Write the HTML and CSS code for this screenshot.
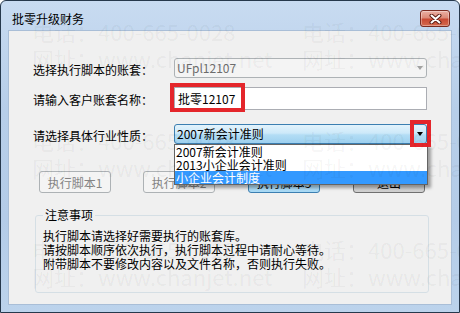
FILE: index.html
```html
<!DOCTYPE html>
<html lang="zh-CN">
<head>
<meta charset="utf-8">
<title>批零升级财务</title>
<link rel="stylesheet" href="styles.css">
</head>
<body>
<div class="window">
  <div class="titlebar">
    <span class="title">批零升级财务</span>
    <button class="close" aria-label="关闭">
      <svg width="13" height="10" viewBox="0 0 13 10"><path d="M2.5 1.5 L10.5 8.5 M10.5 1.5 L2.5 8.5" stroke="#5b1d14" stroke-width="4" stroke-linecap="round"/><path d="M2.5 1.5 L10.5 8.5 M10.5 1.5 L2.5 8.5" stroke="#ffffff" stroke-width="2" stroke-linecap="round"/></svg>
    </button>
  </div>
  <div class="client">
    <div class="row r1">
      <span class="label">选择执行脚本的账套：</span>
      <div class="combo disabled"><span class="value">UFpl12107</span><span class="arrow"></span></div>
    </div>
    <div class="row r2">
      <span class="label">请输入客户账套名称：</span>
      <div class="textbox">批零12107</div>
    </div>
    <div class="row r3">
      <span class="label">请选择具体行业性质：</span>
      <div class="combo-wrap">
        <div class="combo open"><span class="value">2007新会计准则</span><span class="arrow"></span></div>
        <ul class="droplist">
          <li>2007新会计准则</li>
          <li>2013小企业会计准则</li>
          <li class="sel">小企业会计制度</li>
        </ul>
      </div>
    </div>
    <div class="buttons">
      <button class="btn off first">执行脚本1</button>
      <button class="btn off">执行脚本2</button>
      <button class="btn def">执行脚本3</button>
      <button class="btn">退出</button>
    </div>
    <fieldset class="notes">
      <legend>注意事项</legend>
      <p>执行脚本请选择好需要执行的账套库。</p>
      <p>请按脚本顺序依次执行，执行脚本过程中请耐心等待。</p>
      <p>附带脚本不要修改内容以及文件名称，否则执行失败。</p>
    </fieldset>
    <div class="mark mark-name"></div>
    <div class="mark mark-arrow"></div>
  </div>
  <div class="watermark">
    <div class="wm"><div>电话：400-665-0028</div><div>网址：www.chanjet.net</div></div>
    <div class="wm"><div>电话：400-665-0028</div><div>网址：www.chanjet.net</div></div>
    <div class="wm"><div>电话：400-665-0028</div><div>网址：www.chanjet.net</div></div>
    <div class="wm"><div>电话：400-665-0028</div><div>网址：www.chanjet.net</div></div>
    <div class="wm"><div>电话：400-665-0028</div><div>网址：www.chanjet.net</div></div>
    <div class="wm"><div>电话：400-665-0028</div><div>网址：www.chanjet.net</div></div>
  </div>
</div>
</body>
</html>
```
FILE: styles.css
```css
* { box-sizing: border-box; }
body {
  margin: 0;
  background: #ffffff;
  font-family: "Noto Sans CJK SC", "DejaVu Sans", sans-serif;
  font-size: 12px;
  color: #000;
}
.window {
  position: relative;
  width: 460px;
  height: 313px;
  border: 1px solid #26384c;
  border-radius: 6px 6px 0 0;
  background: linear-gradient(180deg, #c8dbf1 0%, #b7cee9 35%, #b4cce8 70%, #bcd3ec 100%);
  display: flex;
  flex-direction: column;
  padding: 0 7px 7px 7px;
  overflow: hidden;
}
.titlebar {
  height: 29px;
  flex: none;
  display: flex;
  align-items: flex-start;
  margin: 0 -7px;
  padding: 0 9px 0 11px;
}
.title {
  margin-top: 10px;
  line-height: 16px;
  font-size: 12px;
  color: #000;
}
.close {
  margin-left: auto;
  margin-top: 9px;
  width: 30px;
  height: 17px;
  padding: 0;
  border: 1px solid #7a2c22;
  border-radius: 3px;
  background: linear-gradient(180deg, #eab0a4 0%, #dc8a78 45%, #c84a34 55%, #d56a4e 100%);
  box-shadow: inset 0 0 0 1px rgba(255,255,255,0.35);
  display: flex;
  align-items: center;
  justify-content: center;
}
.client {
  flex: 1;
  position: relative;
  background: #f0f0f0;
  border: 1px solid #a9bed7;
  padding: 27px 0 0 24px;
}
.row {
  display: flex;
  align-items: center;
}
.label {
  width: 141px;
  flex: none;
  padding-top: 3px;
  line-height: 14px;
}
.r2 { margin-top: 9px; }
.r3 { margin-top: 14px; }
.combo {
  width: 253px;
  height: 20px;
  border: 1px solid #adb2b5;
  border-radius: 3px;
  display: flex;
  align-items: center;
  padding-left: 2px;
  line-height: 14px;
}
.combo.disabled {
  background: #f4f4f4;
  color: #6d6d6d;
}
.combo .arrow {
  margin-left: auto;
  margin-right: 3px;
  width: 0;
  height: 0;
  border-left: 3.5px solid transparent;
  border-right: 3.5px solid transparent;
  border-top: 4px solid #000;
}
.combo.disabled .arrow { border-top-color: #a2a2a2; }
.combo.open {
  border-color: #3c7fb1;
  background: linear-gradient(180deg, #e3f3fc 0%, #cde9f9 45%, #b3ddf5 55%, #9dd0ef 100%);
}
.textbox {
  width: 253px;
  height: 23px;
  border: 1px solid #abadb3;
  background: #ffffff;
  padding-left: 3px;
  line-height: 21px;
}
.combo-wrap {
  position: relative;
}
.droplist {
  position: absolute;
  left: 0;
  top: 20px;
  width: 254px;
  margin: 0;
  padding: 0;
  list-style: none;
  background: #ffffff;
  border: 1px solid #646464;
  box-shadow: 3px 3px 3px rgba(0,0,0,0.35);
  z-index: 3;
}
.droplist li {
  height: 13px;
  line-height: 13px;
  padding-left: 1px;
  white-space: nowrap;
}
.droplist li.sel {
  background: #3399ff;
  color: #ffffff;
}
.buttons {
  display: flex;
  gap: 33px;
  margin: 27px 0 0 6px;
}
.btn {
  width: 72px;
  height: 22px;
  padding: 0;
  font-family: inherit;
  font-size: 12px;
  color: #000;
  border: 1px solid #707070;
  border-radius: 3px;
  background: linear-gradient(180deg, #f2f2f2 0%, #ebebeb 48%, #dddddd 52%, #cfcfcf 100%);
}
.btn.first { margin-right: -1px; }
.btn.off {
  border-color: #adb2b5;
  background: #f4f4f4;
  color: #838383;
}
.btn.def {
  border-color: #3c7fb1;
  background: linear-gradient(180deg, #eaf6fd 0%, #d9f0fc 48%, #bee6fd 52%, #a7d9f5 100%);
}
.notes {
  margin: 15px 0 0 2px;
  width: 394px;
  height: 85px;
  border: 1px solid #d5dfe5;
  border-radius: 3px;
  padding: 7px 0 0 7px;
}
.notes legend {
  padding: 0 2px;
  line-height: 14px;
}
.notes p {
  margin: 0;
  line-height: 14px;
  white-space: nowrap;
}
.mark {
  position: absolute;
  border: 4px solid #e4262b;
  z-index: 4;
}
.mark-name { left: 161px; top: 52px; width: 75px; height: 29px; }
.mark-arrow { left: 401px; top: 89px; width: 21px; height: 27px; }
.watermark {
  position: absolute;
  left: 31px;
  top: 17px;
  display: grid;
  grid-template-columns: repeat(2, 270px);
  grid-auto-rows: 109px;
  font-size: 22px;
  line-height: 27px;
  color: rgba(0,0,0,0.05);
  pointer-events: none;
  z-index: 6;
  white-space: nowrap;
}
```
